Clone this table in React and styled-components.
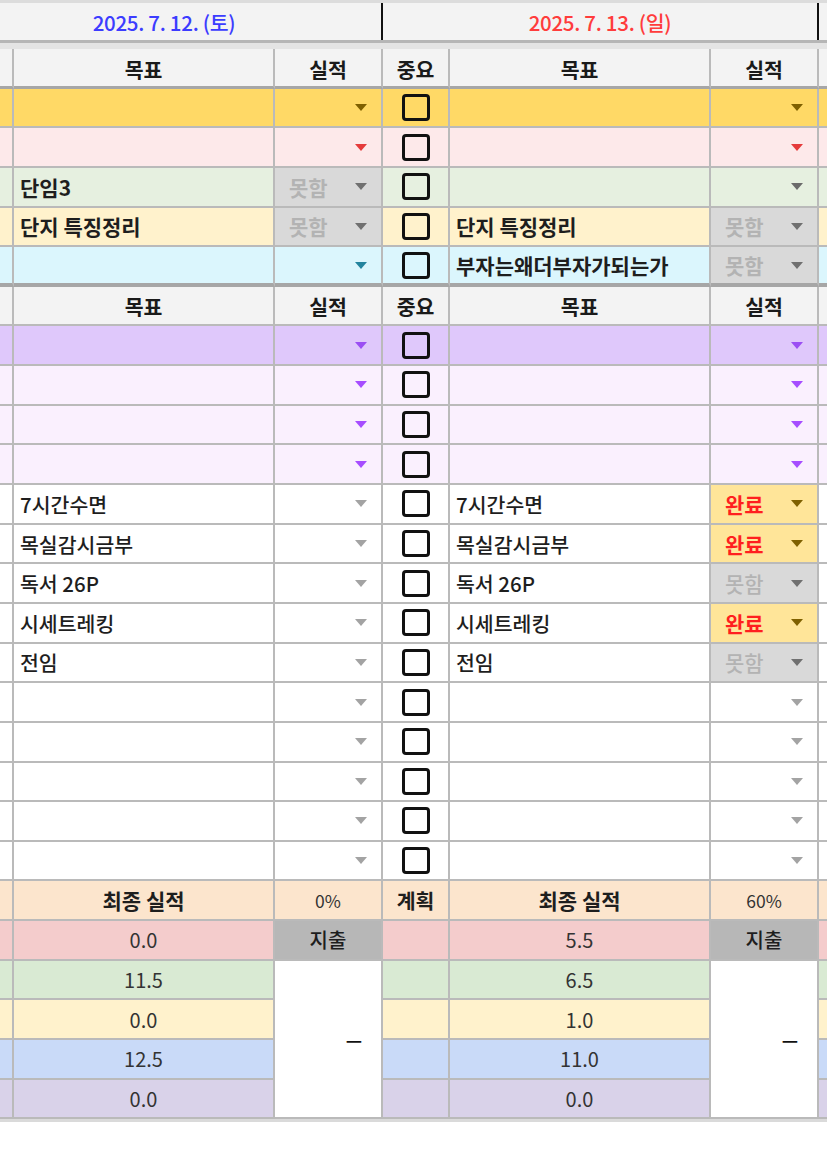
import React from 'react';
import styled, { createGlobalStyle, css } from 'styled-components';

const FONT = `"Noto Sans CJK KR", "Noto Sans", sans-serif`;
const LINE = '#bababa';
const THICK = '#a6a6a6';

const GlobalStyle = createGlobalStyle`
  html, body { margin: 0; padding: 0; background: #ffffff; }
  body { font-family: ${FONT}; color: #222; }
`;

/* The sheet is scrolled sideways: the viewport shows the tail of one day and a neighbour's edge. */
const Viewport = styled.div`
  width: 827px;
  overflow: hidden;
  border-top: 3px solid #dcdcdc;
`;

const Sheet = styled.div`
  width: 1308px;
  margin-left: -53px;
  display: flex;
  flex-direction: column;
`;

const DateRow = styled.div`
  display: grid;
  grid-template-columns: repeat(3, 436px);
  height: 37px;
  background: #f3f3f3;
`;

const DateCell = styled.div`
  display: flex;
  align-items: center;
  justify-content: center;
  border-right: 2px solid #111;
  font-size: 20.5px;
  font-weight: 500;
  letter-spacing: -0.3px;
  color: ${(p) => p.$color};
`;

const FreezeBar = styled.div`
  box-sizing: border-box;
  height: 9px;
  background: #e4e4e4;
  border-top: 3px solid #b6b6b6;
`;

const Grid = styled.div`
  display: grid;
  grid-template-columns: repeat(3, 67px 261px 108px);
  grid-auto-rows: 39.65px;
`;

const Cell = styled.div`
  box-sizing: border-box;
  display: flex;
  align-items: center;
  min-width: 0;
  overflow: hidden;
  white-space: nowrap;
  font-size: 20.5px;
  font-weight: 500;
  border-right: 2px solid ${LINE};
  border-bottom: ${(p) => p.$bottom || 2}px solid ${(p) => ((p.$bottom || 2) > 2 ? THICK : LINE)};
  background: ${(p) => p.$bg || '#ffffff'};
`;

const HeaderCell = styled(Cell)`
  justify-content: center;
  padding-top: ${(p) => p.$padTop || 0}px;
  font-weight: 700;
  background: #f3f3f3;
  color: #1a1a1a;
`;

const GoalCell = styled(Cell)`
  padding-left: 6px;
  font-size: ${(p) => (p.$bold ? 21 : 20.5)}px;
  font-weight: ${(p) => (p.$bold ? 700 : 500)};
  color: #1e1e1e;
`;

const statusStyles = {
  '못함': css`
    background: #d9d9d9;
    color: #b3b3b3;
  `,
  '완료': css`
    background: #ffe599;
    color: #ff1f1f;
    font-weight: 700;
  `,
};

const ResultCell = styled(Cell)`
  padding-left: 14px;
  font-size: 21px;
  font-weight: ${(p) => (p.$bold ? 700 : 500)};
  ${(p) => statusStyles[p.$status]}
`;

const Arrow = styled.span`
  width: 0;
  height: 0;
  margin-left: auto;
  margin-right: 14px;
  border-left: 6px solid transparent;
  border-right: 6px solid transparent;
  border-top: 7px solid ${(p) => p.$color};
`;

const CheckCell = styled(Cell)`
  justify-content: center;
`;

const Checkbox = styled.span`
  box-sizing: border-box;
  width: 28px;
  height: 27px;
  border: 3px solid #111;
  border-radius: 4px;
`;

const CenterCell = styled(Cell)`
  justify-content: center;
  font-weight: ${(p) => (p.$bold ? 700 : 400)};
  font-size: ${(p) => p.$size || 20.5}px;
  color: ${(p) => p.$color || '#1e1e1e'};
`;

const ExpenseCell = styled(Cell)`
  justify-content: center;
  background: #b7b7b7;
  color: #1e1e1e;
  font-size: 20px;
`;

const MergedCell = styled(Cell)`
  grid-row: span 4;
  justify-content: flex-end;
  padding-right: 19px;
  background: #ffffff;
  font-size: 18px;
  font-weight: 700;
  color: #111;
`;

const BottomEdge = styled.div`
  height: 3px;
  background: #dadada;
`;

const TOP_THEMES = [
  { bg: '#ffd966', arrow: '#7f6000' },
  { bg: '#fde9ea', arrow: '#e53b3b' },
  { bg: '#e6f0e0', arrow: '#6b6b6b' },
  { bg: '#fff2cc', arrow: '#6b6b6b' },
  { bg: '#dbf6fd', arrow: '#23849e' },
];

const MID_THEMES = [
  { bg: '#dfc8fb', arrow: '#9b4ff3' },
  { bg: '#faf0fe', arrow: '#a64dff' },
  { bg: '#faf0fe', arrow: '#a64dff' },
  { bg: '#faf0fe', arrow: '#a64dff' },
  ...Array.from({ length: 10 }, () => ({ bg: '#ffffff', arrow: '#a3a3a3' })),
];

const SUM_COLORS = ['#fce5cd', '#f4cccc', '#d9ead3', '#fff2cc', '#c9daf8', '#d9d2e9'];

const STATUS_ARROW = { '못함': '#707070', '완료': '#7f6000' };

const habits = ['7시간수면', '목실감시금부', '독서 26P', '시세트레킹', '전임'];

const emptyRows = (n) => Array.from({ length: n }, () => ['', '']);

/* showCheck / showBody: which parts of a day lie inside the visible window */
const DAYS = [
  {
    date: '2025. 7. 12. (토)',
    color: '#3c3cff',
    showCheck: false,
    showBody: true,
    top: [['', ''], ['', ''], ['단임3', '못함'], ['단지 특징정리', '못함'], ['', '']],
    mid: [...emptyRows(4), ...habits.map((h) => [h, '']), ...emptyRows(5)],
    pct: '0%',
    values: ['0.0', '11.5', '0.0', '12.5', '0.0'],
  },
  {
    date: '2025. 7. 13. (일)',
    color: '#ff3c3c',
    showCheck: true,
    showBody: true,
    top: [['', ''], ['', ''], ['', ''], ['단지 특징정리', '못함'], ['부자는왜더부자가되는가', '못함']],
    mid: [
      ...emptyRows(4),
      ['7시간수면', '완료'],
      ['목실감시금부', '완료'],
      ['독서 26P', '못함'],
      ['시세트레킹', '완료'],
      ['전임', '못함'],
      ...emptyRows(5),
    ],
    pct: '60%',
    values: ['5.5', '6.5', '1.0', '11.0', '0.0'],
  },
  {
    date: '',
    color: '#222222',
    showCheck: false,
    showBody: false,
    top: emptyRows(5),
    mid: emptyRows(14),
    pct: '',
    values: ['', '', '', '', ''],
  },
];

function HeaderRow({ bottom, padTop }) {
  return DAYS.map((d, i) => (
    <React.Fragment key={i}>
      <HeaderCell $bottom={bottom} $padTop={padTop}>{d.showCheck ? '중요' : ''}</HeaderCell>
      <HeaderCell $bottom={bottom} $padTop={padTop}>{d.showBody ? '목표' : ''}</HeaderCell>
      <HeaderCell $bottom={bottom} $padTop={padTop}>{d.showBody ? '실적' : ''}</HeaderCell>
    </React.Fragment>
  ));
}

function TaskRow({ rowIndex, section, theme, bold, bottom }) {
  return DAYS.map((d, i) => {
    const [goal, status] = d[section][rowIndex];
    const arrow = STATUS_ARROW[status] || theme.arrow;
    return (
      <React.Fragment key={i}>
        <CheckCell $bg={theme.bg} $bottom={bottom}>
          {d.showCheck && <Checkbox />}
        </CheckCell>
        <GoalCell $bg={theme.bg} $bottom={bottom} $bold={bold}>
          {goal}
        </GoalCell>
        <ResultCell $bg={theme.bg} $bottom={bottom} $status={status} $bold={bold}>
          {status}
          <Arrow $color={arrow} />
        </ResultCell>
      </React.Fragment>
    );
  });
}

function SummaryRows() {
  const rows = [];
  SUM_COLORS.forEach((bg, r) => {
    DAYS.forEach((d, i) => {
      const key = `${r}-${i}`;
      rows.push(
        <CenterCell key={`${key}-p`} $bg={bg} $bold>
          {r === 0 && d.showCheck ? '계획' : ''}
        </CenterCell>
      );
      if (r === 0) {
        rows.push(
          <CenterCell key={`${key}-t`} $bg={bg} $bold $size={21}>
            {d.showBody ? '최종 실적' : ''}
          </CenterCell>,
          <CenterCell key={`${key}-c`} $bg={bg} $size={17.5} $color="#333">
            {d.pct}
          </CenterCell>
        );
      } else {
        rows.push(
          <CenterCell key={`${key}-v`} $bg={bg} $size={20} $color="#333">
            {d.values[r - 1]}
          </CenterCell>
        );
        if (r === 1) rows.push(<ExpenseCell key={`${key}-e`}>{d.showBody ? '지출' : ''}</ExpenseCell>);
        if (r === 2) rows.push(<MergedCell key={`${key}-m`}>{d.showBody ? '—' : ''}</MergedCell>);
      }
    });
  });
  return rows;
}

export default function App() {
  return (
    <>
      <GlobalStyle />
      <Viewport>
        <Sheet>
          <DateRow>
            {DAYS.map((d, i) => (
              <DateCell key={i} $color={d.color}>
                {d.date}
              </DateCell>
            ))}
          </DateRow>
          <FreezeBar />
          <Grid>
            <HeaderRow bottom={3} padTop={4} />
            {TOP_THEMES.map((t, r) => (
              <TaskRow key={r} rowIndex={r} section="top" theme={t} bold bottom={r === 4 ? 4 : 2} />
            ))}
          </Grid>
          <Grid>
            <HeaderRow bottom={2} />
            {MID_THEMES.map((t, r) => (
              <TaskRow key={r} rowIndex={r} section="mid" theme={t} />
            ))}
          </Grid>
          <Grid>
            <SummaryRows />
          </Grid>
          <BottomEdge />
        </Sheet>
      </Viewport>
    </>
  );
}
